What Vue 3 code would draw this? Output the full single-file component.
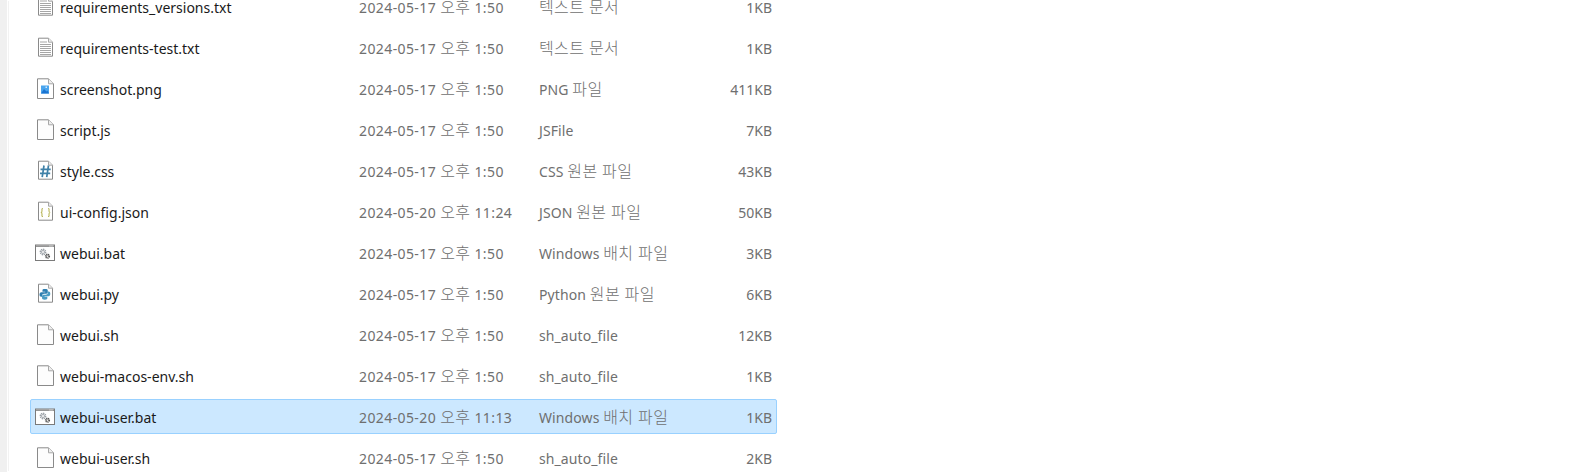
<script setup>
const files = [
  { name: "requirements_versions.txt", date: "2024-05-17 오후 1:50", type: "텍스트 문서", size: "1KB", icon: "txt" },
  { name: "requirements-test.txt", date: "2024-05-17 오후 1:50", type: "텍스트 문서", size: "1KB", icon: "txt" },
  { name: "screenshot.png", date: "2024-05-17 오후 1:50", type: "PNG 파일", size: "411KB", icon: "png" },
  { name: "script.js", date: "2024-05-17 오후 1:50", type: "JSFile", size: "7KB", icon: "blank" },
  { name: "style.css", date: "2024-05-17 오후 1:50", type: "CSS 원본 파일", size: "43KB", icon: "css" },
  { name: "ui-config.json", date: "2024-05-20 오후 11:24", type: "JSON 원본 파일", size: "50KB", icon: "json" },
  { name: "webui.bat", date: "2024-05-17 오후 1:50", type: "Windows 배치 파일", size: "3KB", icon: "bat" },
  { name: "webui.py", date: "2024-05-17 오후 1:50", type: "Python 원본 파일", size: "6KB", icon: "py" },
  { name: "webui.sh", date: "2024-05-17 오후 1:50", type: "sh_auto_file", size: "12KB", icon: "blank" },
  { name: "webui-macos-env.sh", date: "2024-05-17 오후 1:50", type: "sh_auto_file", size: "1KB", icon: "blank" },
  { name: "webui-user.bat", date: "2024-05-20 오후 11:13", type: "Windows 배치 파일", size: "1KB", icon: "bat", selected: true },
  { name: "webui-user.sh", date: "2024-05-17 오후 1:50", type: "sh_auto_file", size: "2KB", icon: "blank" },
];

// Korean runs sit larger than the latin text in these columns
function runs(text) {
  return text.split(/([가-힣]+(?: [가-힣]+)*)/).filter(Boolean).map((part) => ({
    text: part,
    ko: /[가-힣]/.test(part),
  }));
}
</script>

<template>
  <div class="window">
    <div class="sidebar"></div>
    <div class="list">
      <div v-for="file in files" :key="file.name" class="row" :class="{ selected: file.selected }">
        <svg class="icon" viewBox="0 0 20 22" aria-hidden="true">
          <template v-if="file.icon === 'bat'">
            <rect x="0.5" y="3" width="19" height="15.500" fill="#fff" stroke="#7a7a7a" />
            <rect x="1" y="3.500" width="18" height="1.400" fill="#8a8a8a" />
            <path d="M14.500 4h1M16.500 4h1" stroke="#fff" />
            <circle cx="8" cy="10" r="2.600" fill="none" stroke="#9aa0a6" stroke-width="1.600" stroke-dasharray="1.300 .7" />
            <circle cx="8" cy="10" r="1.500" fill="none" stroke="#a8adb2" />
            <circle cx="12.500" cy="14.200" r="1.900" fill="none" stroke="#555" stroke-width="1.400" stroke-dasharray="1.100 .6" />
            <circle cx="12.500" cy="14.200" r="1.100" fill="none" stroke="#666" stroke-width=".8" />
          </template>
          <template v-else-if="file.icon === 'blank' || file.icon === 'png'">
            <path d="M2.500.8h11l5 5v14.700h-16z" :fill="file.icon === 'blank' ? '#fdfdfd' : '#fff'" stroke="#8a8a8a" />
            <path d="M13.500.8v5h5" fill="#eee" stroke="#a8a8a8" />
            <template v-if="file.icon === 'png'">
              <rect x="6" y="7.500" width="8" height="8" fill="#4aa5ee" />
              <path d="M6 15.500l3-4.500 2.500 2.500 1-1 1.500 3z" fill="#1a74d2" />
              <rect x="10.500" y="8.500" width="1.500" height="1.500" fill="#cfe9fb" />
            </template>
          </template>
          <template v-else>
            <path d="M3.500 1.200h10l4 4v14h-14z" fill="#fff" stroke="#8a8a8a" />
            <path d="M13.500 1.200v4h4" fill="#eee" stroke="#a8a8a8" />
            <path v-if="file.icon === 'txt'" d="M5 5h7M5 7.500h11M5 9.500h11M5 11.500h11M5 13.500h11M5 15.500h11M5 17.500h11" stroke="#a6a6a6" />
            <path v-if="file.icon === 'css'" d="M9 5.500l-1.800 11.700M13.500 5.500l-1.800 11.700M5.500 9.300h10.200M5 13.300h10.200" fill="none" stroke="#3f81a8" stroke-width="1.700" />
            <path v-if="file.icon === 'json'" d="M8 7.500c-1.500 0-1 1.200-1 2.500s-.3 1.500-1.200 1.500c.9 0 1.200.3 1.200 1.500s-.5 2.500 1 2.500M13 7.500c1.500 0 1 1.200 1 2.500s.3 1.500 1.200 1.500c-.9 0-1.200.3-1.200 1.500s.5 2.500-1 2.500" fill="none" stroke="#b9b65c" stroke-width="1.100" />
            <g v-if="file.icon === 'py'" transform="translate(1.200 .1) scale(.87)">
              <path d="M10.200 6.500c-2.500 0-3 1-3 2v1.300h3.200v.7H5.800c-1.300 0-2 1.100-2 2.700s.7 2.600 1.900 2.600h1.100v-1.600c0-1.200 1-2 2.200-2h2.600c1 0 1.700-.8 1.700-1.700V8.500c0-1.100-1-2-3.300-2z" fill="#2f7fb0" />
              <path d="M9.800 19c2.500 0 3-1 3-2v-1.300H9.600V15h4.600c1.300 0 2-1.100 2-2.700s-.7-2.600-1.900-2.600h-1.100v1.600c0 1.200-1 2-2.200 2H8.400c-1 0-1.700.8-1.700 1.700V17c0 1.100 1 2 3.100 2z" fill="#4a9cc4" />
            </g>
          </template>
        </svg>
        <span class="name">{{ file.name }}</span>
        <span class="date"><span v-for="(run, i) in runs(file.date)" :key="i" :class="{ ko: run.ko }">{{ run.text }}</span></span>
        <span class="type"><span v-for="(run, i) in runs(file.type)" :key="i" :class="{ ko: run.ko }">{{ run.text }}</span></span>
        <span class="size">{{ file.size }}</span>
      </div>
    </div>
  </div>
</template>

<style>
html,
body {
  margin: 0;
  background: #fff;
  overflow: hidden;
}
</style>

<style scoped>
.window {
  display: flex;
  height: 472px;
  overflow: hidden;
  font-family: "Noto Sans", "Noto Sans CJK KR", sans-serif;
  font-size: 14px;
  background: #fff;
}

.sidebar {
  width: 7px;
  background: #f0f0f0;
  border-right: 1px solid #fff;
  box-shadow: 2px 0 0 -1px #f2f2f2;
  flex: none;
}

.list {
  margin: -11px 0 0 22px;
  display: flex;
  flex-direction: column;
  gap: 6px;
}

.row {
  flex: none;
  width: 747px;
  height: 35px;
  box-sizing: border-box;
  display: grid;
  grid-template-columns: 25px 299px 180px 1fr 60px;
  align-items: center;
  padding: 2px 4px 0;
  border: 1px solid transparent;
  border-radius: 2px;
  color: #6f6f6f;
  white-space: nowrap;
}

.row.selected {
  background: #cce8ff;
  border-color: #99d1ff;
}

.icon {
  width: 20px;
  height: 22px;
  margin-top: -2px;
}

.name {
  color: #1a1a1a;
}

.date {
  letter-spacing: 0.4px;
}

.type {
  letter-spacing: 0.1px;
}

.ko {
  font-size: 16px;
  line-height: 1;
  letter-spacing: 0.4px;
  font-weight: 300;
}

.size {
  text-align: right;
}
</style>
